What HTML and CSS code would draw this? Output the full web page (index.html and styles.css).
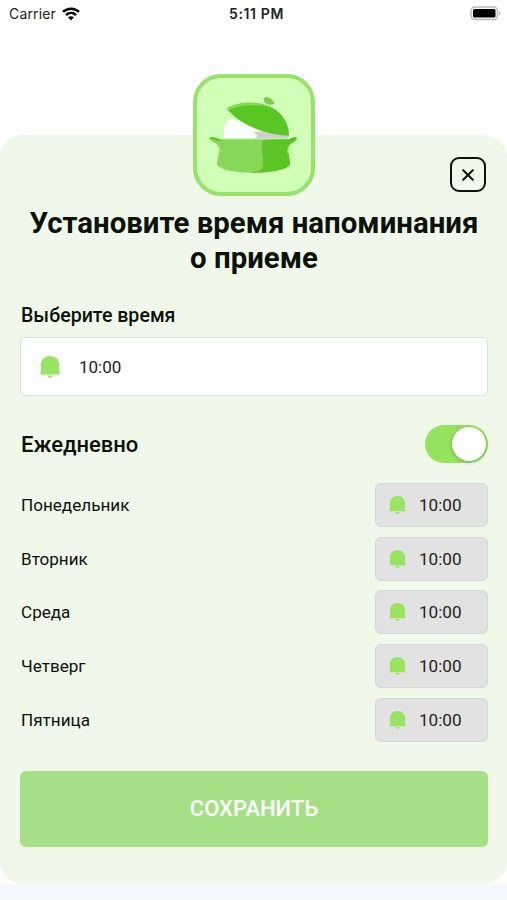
FILE: index.html
```html
<!DOCTYPE html>
<html lang="ru">
<head>
    <meta charset="UTF-8">
    <meta name="viewport" content="width=device-width, initial-scale=1.0">
    <title>Напоминание о приеме</title>
    <link rel="stylesheet" href="styles.css">
</head>
<body>

<svg class="defs" width="0" height="0">
    <symbol id="bell" viewBox="0 0 20 22">
        <path d="M10 0C4.6 0 .8 3.7 .8 8.6V16L0 18.6H20L19.2 16V8.6C19.2 3.7 15.4 0 10 0Z"/>
        <path d="M7.3 19.6H12.7C12.2 21.1 11.2 21.8 10 21.8S7.8 21.1 7.3 19.6Z"/>
    </symbol>
</svg>

<header class="status-bar">
    <div class="carrier">
        <span>Carrier</span>
        <svg class="wifi" viewBox="0 0 18 14">
            <path d="M1 4.9C5.5.6 12.5.6 17 4.9M4 8.1C6.9 5.3 11.1 5.3 14 8.1" fill="none" stroke="#000" stroke-width="2.5"/>
            <path d="M6.1 10.3C7.8 8.8 10.2 8.8 11.9 10.3L9 13.4Z"/>
        </svg>
    </div>
    <div class="clock">5:11 PM</div>
    <div class="battery">
        <svg viewBox="0 0 31 16">
            <rect x="1" y="1" width="26.5" height="12.6" rx="4" fill="#fff" stroke="#b9b9b9" stroke-width="1.5"/>
            <rect x="3" y="3" width="22.5" height="8.6" rx="1.5"/>
            <path d="M29 5C31 5.8 31 8.8 29 9.6Z" fill="#b9b9b9"/>
        </svg>
    </div>
</header>

<main class="sheet">
    <div class="logo">
        <svg viewBox="0 0 122 122">
            <!-- steam and lid -->
            <path d="M32 64C29 55 32 46 39 45.5C46 46 56 52 68 58L76 64Z" fill="#fff"/>
            <path d="M61 64C66 62 64 60 60 58L75 57L96 61.5V64.5H61Z" fill="#cfcfcf"/>
            <path d="M33.7 34.5C45 27 68 28 80 34C90 40 96 50 96 61.7C70 61 45 49 33.7 34.5Z" fill="#59c623"/>
            <path d="M33.7 34.5C45 27 66 26.5 79 33.5C65 30 48 30.5 35 36.3Z" fill="#85da55"/>
            <path d="M70.5 24C74 22 80 25 81.5 29.5C79 31.5 74 31 71.5 28Z" fill="#7cc94f"/>
            <!-- pot -->
            <path d="M17 64.5C18 62.5 21 63 26 65.3L96 65.3C100 63 103 62.5 104 64.5C103 68 97 68.5 95 73C94.5 79 97 84 97 91C93 96 77 98.7 60 98.7C42 98.7 28 96 24 91C24 84 27 79 26 73C24 68.5 18 68 17 64.5Z" fill="#87d759"/>
            <path d="M70 66L96 65.3C100 63 103 62.5 104 64.5C103 68 97 68.5 95 73C94.5 79 97 84 97 91C91 97 73 99.2 54 98.6C63 98 69 97 70 92C71 84 67 76 70 66Z" fill="#59c623"/>
            <path d="M17.5 64.5C20 63.5 23 65 26 66" fill="none" stroke="#59c623" stroke-width="2.2" stroke-linecap="round"/>
            <path d="M24 71C26.5 73 27.5 76 27 79M98 71C95.5 73 94.5 76 95 79" fill="none" stroke="#a8eb83" stroke-width="1.2"/>
        </svg>
    </div>

    <button class="close" aria-label="Закрыть">
        <svg viewBox="0 0 12 12"><path d="M1.2 1.2L10.8 10.8M10.8 1.2L1.2 10.8"/></svg>
    </button>

    <h1>Установите время напоминания<br>о приеме</h1>

    <h2>Выберите время</h2>
    <div class="time-input">
        <svg class="bell"><use href="#bell"/></svg>
        <span>10:00</span>
    </div>

    <div class="daily">
        <h3>Ежедневно</h3>
        <div class="switch"><div class="knob"></div></div>
    </div>

    <div class="days">
        <div class="day">
            <span>Понедельник</span>
            <div class="day-time"><svg class="bell"><use href="#bell"/></svg><span>10:00</span></div>
        </div>
        <div class="day">
            <span>Вторник</span>
            <div class="day-time"><svg class="bell"><use href="#bell"/></svg><span>10:00</span></div>
        </div>
        <div class="day">
            <span>Среда</span>
            <div class="day-time"><svg class="bell"><use href="#bell"/></svg><span>10:00</span></div>
        </div>
        <div class="day">
            <span>Четверг</span>
            <div class="day-time"><svg class="bell"><use href="#bell"/></svg><span>10:00</span></div>
        </div>
        <div class="day">
            <span>Пятница</span>
            <div class="day-time"><svg class="bell"><use href="#bell"/></svg><span>10:00</span></div>
        </div>
    </div>

    <button class="save">СОХРАНИТЬ</button>
</main>

<footer class="bottom"></footer>

</body>
</html>
```
FILE: styles.css
```css
* {
    box-sizing: border-box;
}
body {
    font-family: Roboto, sans-serif;
    margin: 0;
    height: 900px;
    overflow: hidden;
    background-color: #fff;
    color: #0b1309;
}
h1, h2, h3 {
    margin: 0;
}
.defs {
    display: block;
}
.status-bar {
    display: grid;
    grid-template-columns: 1fr auto 1fr;
    align-items: center;
    height: 27px;
    padding: 0 6px 0 9px;
    font-family: Inter, sans-serif;
    font-size: 14px;
    color: #222;
}
.carrier {
    display: flex;
    align-items: center;
    gap: 6px;
    font-size: 14px;
    letter-spacing: 0.15px;
}
.wifi {
    width: 18px;
    height: 14px;
}
.clock {
    margin-left: 3px;
    font-weight: 600;
    letter-spacing: 0.6px;
}
.battery {
    display: flex;
    justify-content: flex-end;
}
.battery svg {
    width: 31px;
    height: 16px;
}
.sheet {
    position: relative;
    height: 749px;
    margin-top: 108px;
    padding: 71px 19px 0 20px;
    border-radius: 23px;
    background-color: #eff8e9;
}
.logo {
    position: absolute;
    top: -61px;
    left: 193px;
    width: 122px;
    height: 122px;
    border: 4px solid #96e26b;
    border-radius: 28px;
    background-color: #d2ffb7;
}
.logo svg {
    display: block;
    width: 122px;
    height: 122px;
    margin: -4px;
}
.close {
    position: absolute;
    top: 22px;
    right: 21px;
    display: flex;
    align-items: center;
    justify-content: center;
    width: 36px;
    height: 35px;
    padding: 0;
    border: 2px solid #0b1309;
    border-radius: 9px;
    background: none;
}
.close svg {
    width: 12px;
    height: 12px;
    fill: none;
    stroke: #0b1309;
    stroke-width: 2;
    stroke-linecap: round;
}
h1 {
    font-size: 29.4px;
    line-height: 35px;
    font-weight: 700;
    text-align: center;
    white-space: nowrap;
}
h2 {
    margin-top: 28px;
    padding-left: 1px;
    font-size: 19.6px;
    line-height: 24px;
    font-weight: 500;
}
.bell {
    fill: #98e35f;
}
.time-input {
    display: flex;
    align-items: center;
    gap: 19px;
    height: 59px;
    margin-top: 9px;
    padding-left: 19px;
    border: 1px solid #d9dfd9;
    border-radius: 6px;
    background-color: #fff;
    font-size: 17px;
    color: #222;
}
.time-input .bell {
    width: 20px;
    height: 22px;
}
.daily {
    display: flex;
    align-items: center;
    justify-content: space-between;
    height: 38px;
    margin-top: 29px;
}
h3 {
    padding-left: 1px;
    font-size: 22px;
    font-weight: 500;
}
.switch {
    display: flex;
    align-items: center;
    justify-content: flex-end;
    width: 63px;
    height: 38px;
    padding-right: 2px;
    border-radius: 19px;
    background-color: #95e25f;
}
.knob {
    width: 34px;
    height: 34px;
    border-radius: 50%;
    background-color: #fff;
    box-shadow: 0 1px 4px rgba(0, 0, 0, 0.25);
}
.days {
    display: flex;
    flex-direction: column;
    gap: 9.7px;
    margin-top: 20px;
}
.day {
    display: flex;
    align-items: center;
    justify-content: space-between;
    height: 44px;
    padding-left: 1px;
    font-size: 17.1px;
}
.day-time {
    display: flex;
    align-items: center;
    gap: 13px;
    width: 113px;
    height: 44px;
    padding-left: 13px;
    border: 1px solid #d2d9d3;
    border-radius: 6px;
    background-color: #e2e2e2;
    color: #222;
}
.day-time .bell {
    width: 17px;
    height: 18px;
}
.save {
    display: block;
    width: 100%;
    height: 76px;
    margin-top: 29px;
    border: none;
    border-radius: 6px;
    background-color: #a5e086;
    color: #fff;
    font-family: inherit;
    font-size: 22px;
    font-weight: 500;
}
.bottom {
    height: 16px;
    background-color: #f4f7fb;
}
```
